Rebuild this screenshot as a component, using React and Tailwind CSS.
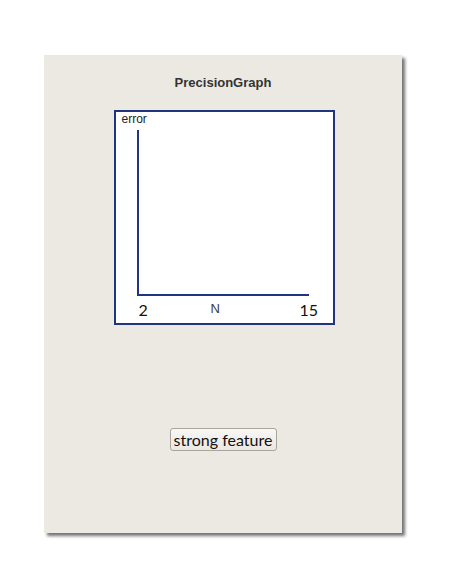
export default function App() {
  return (
    <div className="min-h-[575px] bg-white pt-[55px] pl-[44px]">
      <div className="w-[358px] h-[478px] bg-[#ece9e3] shadow-[3px_3px_3px_rgba(0,0,0,0.55)] flex flex-col items-center">
        <h1 className="mt-[21px] text-[13px] leading-[13px] font-bold text-[#333] font-['Arial','Liberation_Sans',sans-serif]">
          PrecisionGraph
        </h1>

        {/* graph */}
        <div className="mt-[21px] ml-[2px] w-[221px] h-[215px] border-2 border-[#1f3580] bg-white relative">
          <svg className="absolute inset-0" width="217" height="211">
            <line x1="22" y1="18" x2="22" y2="184" stroke="#1f3580" strokeWidth="2" />
            <line x1="21" y1="183" x2="193" y2="183" stroke="#1f3580" strokeWidth="2" />
          </svg>
          <span className="absolute left-[6px] top-[1px] text-[12px] leading-[12px] text-[#222] font-['Arial','Liberation_Sans',sans-serif]">
            error
          </span>
          <span className="absolute left-[23px] top-[190px] text-[16px] leading-[16px] text-[#111] font-['Lato',sans-serif]">
            2
          </span>
          <span className="absolute left-[95px] top-[190px] text-[13px] leading-[13px] text-[#3a3a3a] font-['Arial','Liberation_Sans',sans-serif]">
            N
          </span>
          <span className="absolute left-[184px] top-[190px] text-[16px] leading-[16px] text-[#111] font-['Lato',sans-serif]">
            15
          </span>
        </div>

        <button className="mt-[103px] w-[107px] h-[23px] flex items-center justify-center rounded-[3px] border border-[#a9a59d] bg-gradient-to-b from-[#f8f7f4] to-[#ebe8e2] text-[16px] leading-[16px] text-[#111] font-['Lato',sans-serif]">
          strong feature
        </button>
      </div>
    </div>
  );
}
